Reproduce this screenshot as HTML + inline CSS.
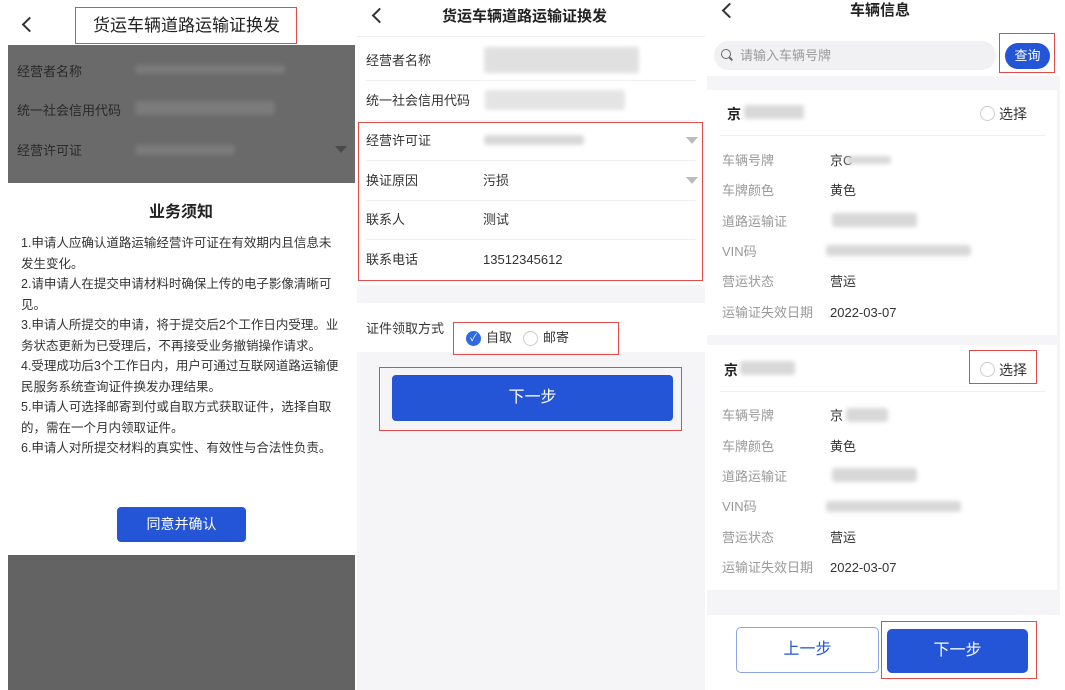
<!DOCTYPE html><html><head><meta charset="utf-8"><style>
*{margin:0;padding:0;box-sizing:border-box}
body{width:1065px;height:690px;background:#fff;position:relative;overflow:hidden;font-family:"Liberation Sans","Noto Sans CJK SC",sans-serif;color:#333}
.a{position:absolute}
.t{position:absolute;font-size:13px;white-space:nowrap;line-height:16px}
.blur{position:absolute;background:#d8d8d8;filter:blur(2px);border-radius:3px}
.red{position:absolute;border:1.5px solid #e34a4a}
.back{position:absolute;width:11px;height:11px;border-left:2px solid #333;border-bottom:2px solid #333;transform:rotate(45deg)}
.tri{position:absolute;width:0;height:0;border-left:6px solid transparent;border-right:6px solid transparent;border-top:7px solid #aaa}
.btn{position:absolute;background:#2455d6;color:#fff;border-radius:5px;text-align:center}
.lbl{color:#999}
</style></head><body>
<!-- Panel 1 -->
<div class="back" style="left:24px;top:19px"></div>
<div class="t" style="left:93px;top:16px;font-size:17px;line-height:20px;color:#222">货运车辆道路运输证换发</div>
<div class="red" style="left:75px;top:7px;width:222px;height:37px"></div>
<div class="a" style="left:8px;top:45px;width:347px;height:138px;background:#6a6a6a"></div>
<div class="t" style="left:17px;top:64px;color:#2a2a2a">经营者名称</div>
<div class="blur" style="left:135px;top:65px;width:150px;height:9px;background:#7b7b7b"></div>
<div class="t" style="left:17px;top:103px;color:#2a2a2a">统一社会信用代码</div>
<div class="blur" style="left:135px;top:101px;width:140px;height:14px;background:#7b7b7b"></div>
<div class="t" style="left:17px;top:143px;color:#2a2a2a">经营许可证</div>
<div class="blur" style="left:135px;top:145px;width:100px;height:10px;background:#7b7b7b"></div>
<div class="tri" style="left:335px;top:146px;border-top-color:#4a4a4a"></div>
<div class="t" style="left:149px;top:204px;font-size:16px;line-height:18px;font-weight:bold;color:#222">业务须知</div>
<div class="a" style="left:21px;top:233px;width:320px;font-size:12.5px;line-height:20.5px;color:#333">1.申请人应确认道路运输经营许可证在有效期内且信息未发生变化。<br>2.请申请人在提交申请材料时确保上传的电子影像清晰可见。<br>3.申请人所提交的申请，将于提交后2个工作日内受理。业务状态更新为已受理后，不再接受业务撤销操作请求。<br>4.受理成功后3个工作日内，用户可通过互联网道路运输便民服务系统查询证件换发办理结果。<br>5.申请人可选择邮寄到付或自取方式获取证件，选择自取的，需在一个月内领取证件。<br>6.申请人对所提交材料的真实性、有效性与合法性负责。</div>
<div class="btn" style="left:117px;top:507px;width:129px;height:35px;line-height:35px;font-size:14px;border-radius:4px">同意并确认</div>
<div class="a" style="left:8px;top:555px;width:347px;height:135px;background:#636363"></div>
<!-- Panel 2 -->
<div class="a" style="left:357px;top:0;width:348px;height:690px;background:#f5f5f7"></div>
<div class="a" style="left:357px;top:0;width:348px;height:285px;background:#fff"></div>
<div class="a" style="left:357px;top:36px;width:348px;height:1px;background:#eee"></div>
<div class="back" style="left:374px;top:10px"></div>
<div class="t" style="left:442px;top:8px;font-size:15px;line-height:18px;font-weight:bold;color:#222">货运车辆道路运输证换发</div>
<div class="t" style="left:366px;top:53px">经营者名称</div>
<div class="blur" style="left:484px;top:47px;width:155px;height:26px;background:#e0e0e0"></div>
<div class="t" style="left:366px;top:93px">统一社会信用代码</div>
<div class="blur" style="left:485px;top:90px;width:140px;height:20px;background:#e4e4e4"></div>
<div class="t" style="left:366px;top:133px">经营许可证</div>
<div class="blur" style="left:484px;top:135px;width:100px;height:10px"></div>
<div class="tri" style="left:686px;top:137px;border-top-color:#bbb"></div>
<div class="t" style="left:366px;top:173px">换证原因</div>
<div class="t" style="left:483px;top:173px">污损</div>
<div class="tri" style="left:686px;top:177px;border-top-color:#bbb"></div>
<div class="t" style="left:366px;top:212px">联系人</div>
<div class="t" style="left:483px;top:212px">测试</div>
<div class="t" style="left:366px;top:252px">联系电话</div>
<div class="t" style="left:483px;top:252px">13512345612</div>
<div class="a" style="left:366px;top:80px;width:330px;height:1px;background:#f0f0f0"></div>
<div class="a" style="left:366px;top:120px;width:330px;height:1px;background:#f0f0f0"></div>
<div class="a" style="left:366px;top:160px;width:330px;height:1px;background:#f0f0f0"></div>
<div class="a" style="left:366px;top:200px;width:330px;height:1px;background:#f0f0f0"></div>
<div class="a" style="left:366px;top:239px;width:330px;height:1px;background:#f0f0f0"></div>
<div class="red" style="left:358px;top:122px;width:345px;height:159px"></div>
<div class="a" style="left:357px;top:303px;width:348px;height:49px;background:#fff"></div>
<div class="t" style="left:366px;top:321px">证件领取方式</div>
<div class="a" style="left:466px;top:331px;width:15px;height:15px;border-radius:50%;background:#2d6be0;color:#fff;font-size:10px;line-height:15px;text-align:center">✓</div>
<div class="t" style="left:486px;top:330px">自取</div>
<div class="a" style="left:523px;top:331px;width:15px;height:15px;border-radius:50%;border:1px solid #ccc"></div>
<div class="t" style="left:543px;top:330px">邮寄</div>
<div class="red" style="left:453px;top:322px;width:166px;height:33px"></div>
<div class="btn" style="left:392px;top:375px;width:281px;height:46px;line-height:46px;font-size:16px;border-radius:4px">下一步</div>
<div class="red" style="left:379px;top:367px;width:303px;height:64px"></div>
<!-- Panel 3 -->
<div class="a" style="left:707px;top:0;width:353px;height:690px;background:#f5f5f7"></div>
<div class="a" style="left:707px;top:0;width:353px;height:76px;background:#fff"></div>
<div class="back" style="left:724px;top:5px"></div>
<div class="t" style="left:850px;top:2px;font-size:15px;line-height:18px;font-weight:bold;color:#222">车辆信息</div>
<div class="a" style="left:714px;top:41px;width:282px;height:29px;border-radius:15px;background:#f1f1f3"></div>
<div class="a" style="left:721px;top:49px;width:10px;height:10px;border:1.5px solid #666;border-radius:50%"></div>
<div class="a" style="left:729px;top:58px;width:4px;height:1.5px;background:#666;transform:rotate(45deg)"></div>
<div class="t" style="left:740px;top:48px;color:#999">请输入车辆号牌</div>
<div class="a" style="left:1005px;top:43px;width:45px;height:26px;border-radius:13px;background:#2455d6;color:#fff;font-size:13px;line-height:26px;text-align:center">查询</div>
<div class="red" style="left:999px;top:33px;width:56px;height:40px"></div>
<div class="a" style="left:707px;top:90px;width:350px;height:245px;background:#fff"></div>
<div class="a" style="left:707px;top:345px;width:350px;height:245px;background:#fff"></div>
<div class="t" style="left:727px;top:106px;font-weight:bold;font-size:14px;color:#222">京</div>
<div class="blur" style="left:744px;top:105px;width:60px;height:14px"></div>
<div class="a" style="left:980px;top:106px;width:15px;height:15px;border-radius:50%;border:1px solid #ccc"></div>
<div class="t" style="left:999px;top:106px;font-size:14px">选择</div>
<div class="a" style="left:720px;top:135px;width:325px;height:1px;background:#eee"></div>
<div class="t" style="left:724px;top:362px;font-weight:bold;font-size:14px;color:#222">京</div>
<div class="blur" style="left:740px;top:361px;width:55px;height:14px"></div>
<div class="a" style="left:980px;top:362px;width:15px;height:15px;border-radius:50%;border:1px solid #ccc"></div>
<div class="t" style="left:999px;top:362px;font-size:14px">选择</div>
<div class="red" style="left:969px;top:350px;width:68px;height:34px"></div>
<div class="a" style="left:720px;top:391px;width:325px;height:1px;background:#eee"></div>
<div class="t lbl" style="left:722px;top:153px">车辆号牌</div><div class="t" style="left:830px;top:153px">京C</div><div class="blur" style="left:846px;top:156px;width:45px;height:8px"></div>
<div class="t lbl" style="left:722px;top:183px">车牌颜色</div><div class="t" style="left:830px;top:183px">黄色</div>
<div class="t lbl" style="left:722px;top:214px">道路运输证</div><div class="blur" style="left:832px;top:213px;width:85px;height:14px"></div>
<div class="t lbl" style="left:722px;top:244px">VIN码</div><div class="blur" style="left:826px;top:245px;width:145px;height:11px"></div>
<div class="t lbl" style="left:722px;top:274px">营运状态</div><div class="t" style="left:830px;top:274px">营运</div>
<div class="t lbl" style="left:722px;top:305px">运输证失效日期</div><div class="t" style="left:830px;top:305px">2022-03-07</div>
<div class="t lbl" style="left:722px;top:408px">车辆号牌</div><div class="t" style="left:830px;top:408px">京</div><div class="blur" style="left:846px;top:408px;width:42px;height:14px"></div>
<div class="t lbl" style="left:722px;top:439px">车牌颜色</div><div class="t" style="left:830px;top:439px">黄色</div>
<div class="t lbl" style="left:722px;top:469px">道路运输证</div><div class="blur" style="left:832px;top:468px;width:85px;height:14px"></div>
<div class="t lbl" style="left:722px;top:499px">VIN码</div><div class="blur" style="left:826px;top:501px;width:135px;height:11px"></div>
<div class="t lbl" style="left:722px;top:530px">营运状态</div><div class="t" style="left:830px;top:530px">营运</div>
<div class="t lbl" style="left:722px;top:560px">运输证失效日期</div><div class="t" style="left:830px;top:560px">2022-03-07</div>
<div class="a" style="left:707px;top:615px;width:353px;height:75px;background:#fff"></div>
<div class="a" style="left:736px;top:627px;width:143px;height:46px;border:1.5px solid #8aa6e6;border-radius:5px;color:#2455d6;font-size:16px;line-height:43px;text-align:center">上一步</div>
<div class="btn" style="left:887px;top:629px;width:141px;height:44px;line-height:44px;font-size:16px">下一步</div>
<div class="red" style="left:881px;top:621px;width:156px;height:58px"></div>
</body></html>
